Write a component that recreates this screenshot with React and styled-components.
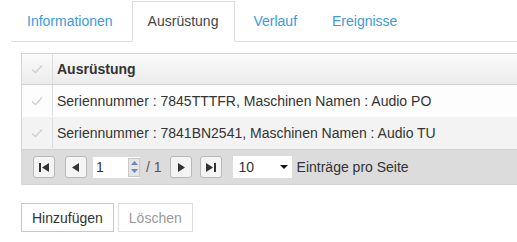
import React from "react";
import styled, { createGlobalStyle } from "styled-components";

const GlobalStyle = createGlobalStyle`
  html, body {
    margin: 0;
    padding: 0;
    background: #ffffff;
    overflow: hidden;
  }
  body {
    font-family: "Liberation Sans", Arial, sans-serif;
    font-size: 14px;
    color: #333333;
  }
`;

const Page = styled.div`
  width: 100%;
  box-sizing: border-box;
  padding: 1px 0 0 11px;
`;

const TabStrip = styled.ul`
  display: flex;
  list-style: none;
  margin: 0;
  padding: 0;
  border-bottom: 1px solid #dddddd;
`;

const Tab = styled.li`
  height: 39px;
  line-height: 39px;
  padding: 0 16px 0 15px;
  margin-right: 2px;
  margin-bottom: -1px;
  border: 1px solid ${(p) => (p.$active ? "#dddddd" : "transparent")};
  border-bottom-color: ${(p) => (p.$active ? "#ffffff" : "transparent")};
  background: ${(p) => (p.$active ? "#ffffff" : "transparent")};
  color: ${(p) => (p.$active ? "#444444" : "#3a9be0")};
  font-size: 14px;
`;

const Panel = styled.div`
  padding: 11px 0 0 10px;
`;

const Grid = styled.div`
  border: 1px solid #d5d5d5;
  border-right: none;
`;

const Row = styled.div`
  display: flex;
  height: ${(p) => p.$h || 30}px;
  background: ${(p) => p.$bg};
  border-bottom: 1px solid ${(p) => p.$line || "transparent"};
`;

const CheckCell = styled.div`
  width: 30px;
  flex: none;
  display: flex;
  align-items: center;
  justify-content: center;
  border-right: 1px solid #dddddd;
`;

const Cell = styled.div`
  display: flex;
  align-items: center;
  padding-left: 4px;
  font-weight: ${(p) => (p.$head ? "bold" : "normal")};
  color: #333333;
`;

const Pager = styled.div`
  display: flex;
  align-items: center;
  height: 34px;
  padding-left: 11px;
  background: #dcdcdc;
  border-top: 1px solid #d0d0d0;
`;

const PageButton = styled.button`
  width: 22px;
  height: 22px;
  padding: 0;
  margin-right: ${(p) => p.$mr || 0}px;
  display: flex;
  align-items: center;
  justify-content: center;
  background: #f4f4f4;
  border: 1px solid #b8b8b8;
  border-radius: 3px;
`;

const PageInput = styled.div`
  display: flex;
  align-items: center;
  justify-content: space-between;
  width: 47px;
  height: 21px;
  background: #ffffff;
  padding-left: 3px;
  box-sizing: border-box;
  color: #333333;
`;

const Spinner = styled.div`
  width: 12px;
  height: 19px;
  background: #e6e6e6;
  border: 1px solid #c8c8c8;
  box-sizing: border-box;
  display: flex;
  flex-direction: column;
  align-items: center;
  justify-content: space-around;
`;

const PageCount = styled.span`
  margin: 0 8px 0 6px;
  color: #555555;
`;

const SizeSelect = styled.div`
  display: flex;
  align-items: center;
  justify-content: space-between;
  width: 59px;
  height: 22px;
  margin: 0 5px 0 11px;
  padding: 0 4px 0 6px;
  box-sizing: border-box;
  background: #ffffff;
`;

const PagerLabel = styled.span`
  color: #333333;
`;

const Actions = styled.div`
  display: flex;
  gap: 4px;
  margin-top: 18px;
`;

const ActionButton = styled.button`
  height: 29px;
  padding: 0 10px;
  font-family: "Liberation Sans", Arial, sans-serif;
  font-size: 14px;
  background: #ffffff;
  border: 1px solid ${(p) => (p.disabled ? "#dddddd" : "#c8c8c8")};
  color: ${(p) => (p.disabled ? "#999999" : "#333333")};
  border-radius: 0;
`;

const Check = () => (
  <svg width="12" height="10" viewBox="0 0 12 10">
    <path d="M1 5.5 L4.5 8.5 L11 1.5" fill="none" stroke="#d2d2d2" strokeWidth="1.6" />
  </svg>
);

const Icon = ({ kind }) => (
  <svg width="12" height="11" viewBox="0 0 12 11">
    {kind === "first" && (
      <>
        <rect x="1" y="1" width="2" height="9" fill="#333" />
        <path d="M11 1 L4 5.5 L11 10 Z" fill="#333" />
      </>
    )}
    {kind === "prev" && <path d="M9 1 L2 5.5 L9 10 Z" fill="#333" />}
    {kind === "next" && <path d="M3 1 L10 5.5 L3 10 Z" fill="#333" />}
    {kind === "last" && (
      <>
        <path d="M1 1 L8 5.5 L1 10 Z" fill="#333" />
        <rect x="9" y="1" width="2" height="9" fill="#333" />
      </>
    )}
  </svg>
);

const rows = [
  { text: "Seriennummer : 7845TTTFR, Maschinen Namen : Audio PO", bg: "#fdfdfd" },
  { text: "Seriennummer : 7841BN2541, Maschinen Namen : Audio TU", bg: "#f3f3f3" },
];

export default function App() {
  return (
    <Page>
      <GlobalStyle />
      <TabStrip>
        <Tab>Informationen</Tab>
        <Tab $active>Ausrüstung</Tab>
        <Tab>Verlauf</Tab>
        <Tab>Ereignisse</Tab>
      </TabStrip>
      <Panel>
        <Grid>
          <Row $bg="linear-gradient(#fbfbfb, #ececec)" $line="#d0d0d0">
            <CheckCell>
              <Check />
            </CheckCell>
            <Cell $head>Ausrüstung</Cell>
          </Row>
          {rows.map((r) => (
            <Row key={r.text} $bg={r.bg} $h={31}>
              <CheckCell>
                <Check />
              </CheckCell>
              <Cell>{r.text}</Cell>
            </Row>
          ))}
          <Pager>
            <PageButton $mr={10}>
              <Icon kind="first" />
            </PageButton>
            <PageButton $mr={6}>
              <Icon kind="prev" />
            </PageButton>
            <PageInput>
              1
              <Spinner>
                <svg width="7" height="4" viewBox="0 0 7 4">
                  <path d="M0 4 L3.5 0 L7 4 Z" fill="#6b86c4" />
                </svg>
                <svg width="7" height="4" viewBox="0 0 7 4">
                  <path d="M0 0 L3.5 4 L7 0 Z" fill="#6b86c4" />
                </svg>
              </Spinner>
            </PageInput>
            <PageCount>/ 1</PageCount>
            <PageButton $mr={8}>
              <Icon kind="next" />
            </PageButton>
            <PageButton>
              <Icon kind="last" />
            </PageButton>
            <SizeSelect>
              10
              <svg width="8" height="4" viewBox="0 0 8 4">
                <path d="M0 0 L4 4 L8 0 Z" fill="#111" />
              </svg>
            </SizeSelect>
            <PagerLabel>Einträge pro Seite</PagerLabel>
          </Pager>
        </Grid>
        <Actions>
          <ActionButton>Hinzufügen</ActionButton>
          <ActionButton disabled>Löschen</ActionButton>
        </Actions>
      </Panel>
    </Page>
  );
}
